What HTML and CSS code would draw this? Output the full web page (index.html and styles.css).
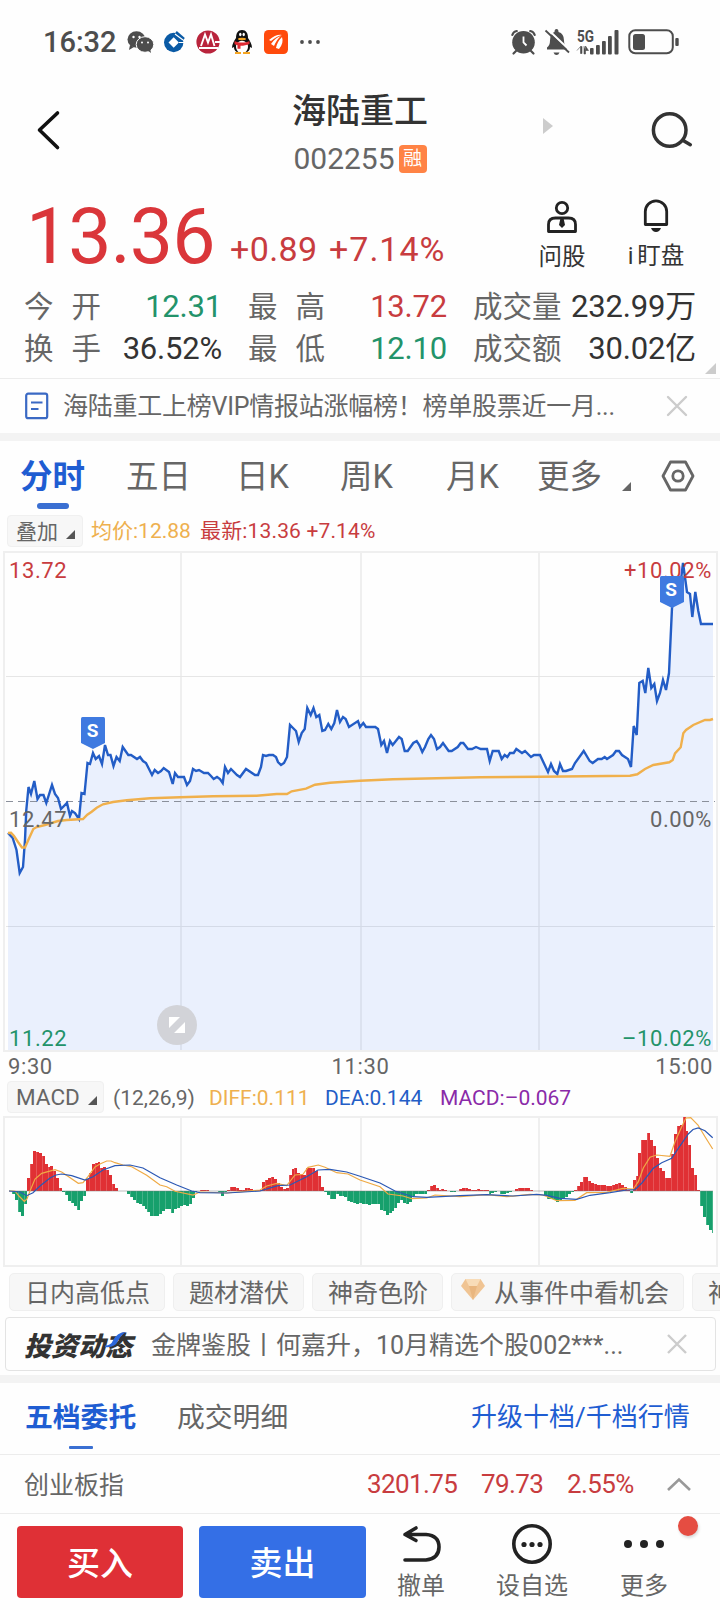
FILE: index.html
```html
<!DOCTYPE html>
<html lang="zh-CN">
<head>
  <meta charset="UTF-8">
  <meta name="viewport" content="width=device-width, initial-scale=1.0">
  <title>海陆重工 002255</title>
  <link rel="stylesheet" href="styles.css">
</head>
<body>

<!-- Status bar -->
<div class="status-bar">
  <span class="clock">16:32</span>
  <svg class="status-left" width="196" height="30" viewBox="126 27 196 30">
    <!-- chat bubbles -->
    <g fill="#4d4d4d">
      <ellipse cx="136.500" cy="39.500" rx="9" ry="8.200"/>
      <path d="M130 45l-1 5 5-3z"/>
      <ellipse cx="145" cy="44.500" rx="8.800" ry="7.800" stroke="#fff" stroke-width="1"/>
      <path d="M147 50l4 3-1-5z"/>
    </g>
    <g fill="#fff">
      <circle cx="133.500" cy="37" r="1.200"/><circle cx="139.500" cy="37" r="1.200"/>
      <circle cx="142" cy="42.500" r="1"/><circle cx="148" cy="42.500" r="1"/>
    </g>
    <!-- blue bank -->
    <circle cx="173.700" cy="42.500" r="9.700" fill="#0a5aa5"/>
    <path d="M173.700 37.300l5.200 5.200-5.200 5.200-5.200-5.200z" fill="#fff"/>
    <path d="M176 32l8 7" stroke="#0a5aa5" stroke-width="2.500"/>
    <path d="M175 34l8 6M179 42.500h6" stroke="#fff" stroke-width="1.200"/>
    <!-- red bank -->
    <circle cx="208" cy="42" r="11.600" fill="#b9243c"/>
    <path d="M201 46l4-11.500 3 8 3-8 3.500 11.500M199 48h19M215 42h6" fill="none" stroke="#fff" stroke-width="1.900"/>
    <!-- penguin -->
    <path d="M236 38c0-5 2-8 6-8s6 3 6 8c2 3 4 6 4 10l-2-1c0 4-3 6-8 6s-8-2-8-6l-2 1c0-4 2-7 4-10z" fill="#111"/>
    <ellipse cx="242" cy="47" rx="6" ry="6.200" fill="#fff"/>
    <path d="M235 52h6v2h-6zM243 52h7v2h-7z" fill="#f5a623"/>
    <path d="M234.500 41c4 2 11 2 15 0v3c-3 1.500-7 1.800-9 1.700v3h-3v-3.500l-3-1z" fill="#df2a33"/>
    <ellipse cx="240.300" cy="34.500" rx="1.200" ry="1.800" fill="#fff"/><ellipse cx="243.700" cy="34.500" rx="1.200" ry="1.800" fill="#fff"/>
    <ellipse cx="242" cy="39" rx="4" ry="1.200" fill="#f5a623"/>
    <!-- orange app -->
    <rect x="264" y="30" width="24" height="24" rx="4.500" fill="#ff4a0c"/>
    <path d="M269 40q7-6 13-5-5 1-11 6zM271 44q5-7 10-8-4 3-7 10zM276 48q1-6 6-11 2 6-3 12z" fill="#fff"/>
    <g fill="#4d4d4d"><circle cx="302" cy="42" r="1.900"/><circle cx="310" cy="42" r="1.900"/><circle cx="318" cy="42" r="1.900"/></g>
  </svg>
  <svg class="status-right" width="172" height="30" viewBox="509 27 172 30">
    <!-- alarm -->
    <g fill="none" stroke="#4d4d4d" stroke-width="2.200" stroke-linecap="round">
      <path d="M512.300 35q1-3.600 4.500-4M534.700 35q-1-3.600-4.500-4M516 51l-2.500 2.500M531 51l2.500 2.500"/>
    </g>
    <circle cx="523.500" cy="42.300" r="11.300" fill="#4d4d4d"/>
    <path d="M523.500 36.500v6l3 3" fill="none" stroke="#fff" stroke-width="1.800"/>
    <!-- muted bell -->
    <path d="M547 49.500v-2q3-2 3-7 0-7 4.500-8.500 0-3 2-3t2 3q5.500 1.500 5.500 8.500 0 5 3 7v2z" fill="#4d4d4d"/>
    <path d="M553.500 52.500h6q-1 2.500-3 2.500t-3-2.500z" fill="#4d4d4d"/>
    <path d="M547.500 29l23 22" stroke="#fff" stroke-width="2"/>
    <path d="M545.500 30.500l23.500 22" stroke="#4d4d4d" stroke-width="1.800"/>
    <!-- signal -->
    <text class="net" x="577" y="41.500" textLength="17" lengthAdjust="spacingAndGlyphs">5G</text>
    <path d="M577 50.500l3.500-4v7h1.500v-7h-1.500M584 46v8h1.500v-8l3 4.500h-3" fill="#4d4d4d" stroke="#4d4d4d" stroke-width=".6"/>
    <g fill="#4d4d4d">
      <rect x="590" y="48" width="3.600" height="6.500" rx="1"/>
      <rect x="596" y="45" width="3.800" height="9.500" rx="1"/>
      <rect x="602" y="41" width="3.800" height="13.500" rx="1"/>
      <rect x="608" y="36" width="3.800" height="18.500" rx="1"/>
      <rect x="614.500" y="30" width="4" height="24.500" rx="1"/>
    </g>
    <!-- battery -->
    <rect x="629.300" y="30.300" width="43.500" height="23" rx="6" fill="none" stroke="#4d4d4d" stroke-width="2"/>
    <rect x="633" y="34" width="12" height="16" rx="2.500" fill="#4d4d4d"/>
    <rect x="675.300" y="38" width="3.400" height="8" rx="1" fill="#4d4d4d"/>
  </svg>
</div>

<!-- Title -->
<header class="header">
  <svg class="back" width="26" height="44" viewBox="36 108 26 44"><path d="M57.500 113l-18 17 18 17.500" fill="none" stroke="#111" stroke-width="3.600" stroke-linecap="round" stroke-linejoin="round"/></svg>
  <div class="title">
    <h1>海陆重工</h1>
    <div class="code"><span>002255</span><b class="badge">融</b></div>
  </div>
  <svg class="next" width="12" height="18" viewBox="0 0 12 18"><path d="M1 1l10 8-10 8z" fill="#ccc"/></svg>
  <svg class="search" width="44" height="44" viewBox="650 108 44 44"><g fill="none" stroke="#333" stroke-width="3.500" stroke-linecap="round"><circle cx="669.700" cy="130" r="16.300"/><path d="M684 141l6.300 3.700"/></g></svg>
</header>

<!-- Price -->
<section class="quote">
  <span class="price">13.36</span>
  <span class="change">+0.89</span>
  <span class="change pct">+7.14%</span>
  <div class="action ask">
    <svg width="32" height="34" viewBox="546 200 32 34"><g fill="none" stroke="#222" stroke-width="2.800"><circle cx="562" cy="208" r="5.700"/><path d="M548.500 231.500v-7q0-6.500 7-6.500h13q7 0 7 6.500v7z" stroke-linejoin="round"/></g><path d="M560.500 218h3l1.500 7-3 3-3-3z" fill="#222"/></svg>
    <span>问股</span>
  </div>
  <div class="action watch">
    <svg width="28" height="34" viewBox="642 200 28 34"><path d="M645.300 225.500v-13a10.700 10.700 0 0 1 21.400 0v13z" fill="none" stroke="#222" stroke-width="2.800" stroke-linejoin="round"/><path d="M651 229h10q-1.500 4-5 4t-5-4z" fill="#222"/></svg>
    <span>i 盯盘</span>
  </div>
</section>

<section class="stats">
  <div class="pair"><span class="label two"><i>今</i><i>开</i></span><span class="value down">12.31</span></div>
  <div class="pair"><span class="label two"><i>最</i><i>高</i></span><span class="value up">13.72</span></div>
  <div class="pair"><span class="label">成交量</span><span class="value">232.99万</span></div>
  <div class="pair"><span class="label two"><i>换</i><i>手</i></span><span class="value">36.52%</span></div>
  <div class="pair"><span class="label two"><i>最</i><i>低</i></span><span class="value down">12.10</span></div>
  <div class="pair"><span class="label">成交额</span><span class="value">30.02亿</span></div>
  <svg class="corner" width="11" height="11" viewBox="0 0 11 11"><path d="M11 0v11H0z" fill="#ccc"/></svg>
</section>

<section class="notice">
  <svg width="24" height="28" viewBox="0 0 24 28"><rect x="1.200" y="1.700" width="21" height="24.500" rx="2" fill="none" stroke="#3a69c4" stroke-width="2.200"/><path d="M6 10.500h11.500M6 17h7.500" stroke="#3a69c4" stroke-width="2"/></svg>
  <p>海陆重工上榜VIP情报站涨幅榜！榜单股票近一月...</p>
  <svg class="close" width="22" height="22" viewBox="0 0 22 22"><path d="M2 2l18 18M20 2L2 20" stroke="#ccc" stroke-width="2.400" stroke-linecap="round"/></svg>
</section>
<div class="band"></div>

<!-- Period tabs -->
<nav class="tabs">
  <a class="active">分时</a>
  <a>五日</a>
  <a>日K</a>
  <a>周K</a>
  <a>月K</a>
  <a class="more">更多<svg width="9" height="9" viewBox="0 0 9 9"><path d="M9 0v9H0z" fill="#666"/></svg></a>
  <svg class="setting" width="34" height="32" viewBox="0 0 34 32"><g fill="none" stroke="#666" stroke-width="2.800" stroke-linejoin="round"><path d="M9.500 2h15l7.500 14-7.500 14h-15L2 16z"/><circle cx="17" cy="16" r="5.200"/></g></svg>
</nav>

<div class="legend">
  <span class="picker">叠加<svg width="9" height="9" viewBox="0 0 9 9"><path d="M9 0v9H0z" fill="#555"/></svg></span>
  <span class="avg">均价:12.88</span>
  <span class="last">最新:13.36 +7.14%</span>
</div>

<!-- Intraday chart -->
<svg class="chart" width="720" height="502" viewBox="0 551 720 502">
  <g stroke="#efefef" stroke-width="2" fill="none">
    <rect x="4" y="552" width="713" height="499"/>
    <path d="M181 552v499M361 552v499M539 552v499"/>
    <path d="M6 676.500h709M6 926.500h709" stroke-width="1.200" stroke="#e6e6e6"/>
  </g>
  <polygon id="priceFill" class="price-fill"/>
  <path d="M6 801.500h709" stroke="#8b909b" stroke-width="1" stroke-dasharray="7 5"/>
  <polyline id="priceLine" class="price-line" points="8,833 12.700,838 16.500,850 19.700,873 23,867 25,840 26.300,810 28.500,787 31,794 34.300,781 37.500,799 40,795 43.500,795 46.300,803 52,785 55,794 58,798 61,809 67,803 70,816 72,811 75,813 79,819 81.500,793 84.500,794 87.500,763 90,764 93,753 95.700,759 99,756 102,764 105,745 108,755 110.500,755 113.500,766 116.500,757 119.700,761 122.700,747 128.300,755 131,755 137,759 140,757 143,761 146,763 152,775 154.700,770 158,773 161,771 163.700,768 169,772 172.700,784 175,773 178,777 184,777 187,785 190,781 193,769 196,771 199,770 204,773 208,773 211,776 213.700,779 217,777 220,779 222.700,783 225,767 228,773 231,769 237,775 240,777 246,769 255,775 258,775 261,767 263,755 266,756 269,755 273,755 276,757 278,762 281,765 284,763 287,757 290,725 293,728 296,731 298.700,742 301.700,733 304.700,729 307.300,708 310.700,715 313.500,708 316.300,717 319.300,715 322.300,731 325,730 328.300,724 331.300,729 334.300,723 337,710 340,722 343,717 345.700,719 349,727 358,721 360,727 363.300,723 366,727 375.300,727 378,729 381.300,745 384,741 387,753 390,741 392.700,745 399,737 401.700,739 404.700,751 407.700,751 413.300,743 416.700,741 419.300,745 422.300,752 425,747 428.300,739 431,735 434,739 437,749 440,747 443,743 448.700,751 451.700,751 457.700,747 460.700,743 463.300,743 468,749 472,749 476,747 480.700,749 487,749 489.700,761 492.700,751 498.700,751 501.700,759 504.700,755 507.300,757 510,753 513.700,753 516.300,749 522,753 525,751 531,757 534,755 540,755 548,772 551,764 554,771 557.300,774 560,764 563,771 566,771 572,769 575,763 583.700,751 589.700,761 592.700,763 598,759 601.700,759 604.700,757 607,759 613,755 616,751 619,751 622,755 628,759 631,767 633.700,726 636.700,735 639.300,683 642.700,681 645.300,693 648.300,668 651.300,688 654.300,684 657,701 660,693 663,680 666,690 669,673 672,608 675,590 680,588 683,563 687,592 690,594 692.300,617 695.300,592 698.300,611 701,624 713,624"/>
  <polyline class="avg-line" points="8,833 11,832.700 14,836 18,842 22,847.500 25,847.500 28.300,840 33.300,829 36.700,827 45,825 58,821 66.700,820 83,819 87.300,814.700 91.700,811.700 96.700,807.700 103,804.300 113,802 126.700,800.300 150,798.300 180,797.300 213,796.300 256.700,795.700 276.700,794 287,794 291.700,791.300 306,788.700 315,784.700 330,782.700 360,780.700 393,779.300 480,777.300 540,776.700 630,775.700 637.300,774.300 645,769 653.300,765 669.300,762.300 672.700,760 675,753.300 680.700,747.300 683.300,733.300 686,730 693.300,725 705,720 710,720 713,719"/>
  <g class="axis-text">
    <text class="up" x="9" y="578">13.72</text>
    <text class="up" x="712" y="578" text-anchor="end">+10.02%</text>
    <text x="9" y="827">12.47</text>
    <text x="712" y="827" text-anchor="end">0.00%</text>
    <text class="down" x="9" y="1046">11.22</text>
    <text class="down" x="712" y="1046" text-anchor="end">–10.02%</text>
  </g>
  <g class="marker">
    <path d="M81 718.500q0-1.500 1.500-1.500h21q1.500 0 1.500 1.500v24.500l-12 6-12-6z"/>
    <text x="92.500" y="737">S</text>
    <path d="M660 577.500q0-1.500 1.500-1.500h21q1.500 0 1.500 1.500v24.500l-12 6-12-6z"/>
    <text x="671" y="596">S</text>
  </g>
  <circle cx="177" cy="1025" r="20" fill="#d2d3d8"/>
  <path d="M169 1017h11l-11 11zM185 1022v11h-11z" fill="#fff"/>
</svg>
<div class="times"><span>9:30</span><span>11:30</span><span>15:00</span></div>

<!-- MACD -->
<div class="legend macd">
  <span class="picker">MACD<svg width="9" height="9" viewBox="0 0 9 9"><path d="M9 0v9H0z" fill="#555"/></svg></span>
  <span class="params">(12,26,9)</span>
  <span class="diff">DIFF:0.111</span>
  <span class="dea">DEA:0.144</span>
  <span class="hist">MACD:–0.067</span>
</div>
<svg class="chart" width="720" height="153" viewBox="0 1115 720 153">
  <g stroke="#efefef" stroke-width="2" fill="none">
    <rect x="4" y="1117" width="713" height="149"/>
    <path d="M181 1117v149M361 1117v149M539 1117v149"/>
  </g>
  <g id="macdBars"></g>
  <path d="M9 1191h704" stroke="#777" stroke-width=".8" stroke-opacity=".6"/>
  <polyline class="diff-line" points="9,1191 15,1191 19,1196 24.300,1201.500 27,1199 30,1191 35,1179 41.700,1173.300 55,1169.700 61.700,1172 78.300,1183.300 83,1182.700 88,1176.700 95,1167 100,1164 106.700,1161 111,1161 115,1162.700 123,1165 131.700,1166.700 146.700,1175.300 160,1185 166.700,1186.700 175,1191.300 193,1195 200,1192 227,1193 260,1190 266.700,1186 276.700,1183.300 286.700,1185.700 295,1175 303,1174.300 308,1167.300 318.300,1165 325,1167.300 336.700,1172.700 348,1174 360,1180 380,1186.700 388,1194 403,1196 411.700,1198.700 426.700,1198 435,1195 460,1196.700 486.700,1194.700 506.700,1196.700 530,1194.300 543,1195 556.700,1200.700 575,1200.300 586.700,1192.700 606.700,1192.300 623,1188.300 633.300,1189 638.300,1181.700 643.300,1168 650,1157.300 656.700,1155 670,1156.300 675,1141.700 681.700,1126.700 686,1118 690.700,1117.700 698,1125 705,1136.700 712.700,1149"/>
  <polyline class="dea-line" points="9,1191 20,1192 26.700,1195.700 33,1192.700 40,1186 50,1178 56,1175 61.700,1174 71.700,1175.700 85,1180 93,1176.700 103,1170 115,1165.700 130,1165 143,1168 160,1177.700 176.700,1185 191.700,1191 200,1192.700 226.700,1193 260,1191 278,1185.700 290,1185 306.700,1176.700 318,1170 330,1169.300 346.700,1172 360,1176.300 380,1183 395,1191 413,1196.700 426.700,1197.300 460,1195.700 486.700,1194.700 513,1196 536.700,1194.300 546.700,1195.300 560,1198.300 576.700,1199.300 590,1195.300 610,1192.700 626.700,1190 635,1189.700 641.700,1183.300 653.300,1168.300 661.700,1162.700 671.700,1158.300 678.300,1148.300 688.300,1134 693,1129.500 698.300,1128 705,1130.700 712.700,1137.700"/>
</svg>

<div class="chips">
  <span>日内高低点</span>
  <span>题材潜伏</span>
  <span>神奇色阶</span>
  <span class="gem"><svg width="24" height="21" viewBox="0 0 24 21"><path d="M4.500 0h15L24 7 12 21 0 7z" fill="#f0c493"/><path d="M4.500 0h15L16 7H8z" fill="#f8dcb8"/><path d="M8 7h8l-4 14z" fill="#e9b67f"/></svg>从事件中看机会</span>
  <span>神</span>
</div>

<div class="promo">
  <b>投资动态</b>
  <svg class="swoosh" width="22" height="18" viewBox="0 0 22 18"><path d="M0 14.500q6 0 8-5Q12 1 21 1q-5 3-8 9-3 7-13 6z" fill="#2b67dc"/></svg>
  <p>金牌鉴股丨何嘉升，10月精选个股002***...</p>
  <svg class="close" width="22" height="22" viewBox="0 0 22 22"><path d="M2 2l18 18M20 2L2 20" stroke="#ccc" stroke-width="2.400"/></svg>
</div>
<div class="band"></div>

<!-- Order book -->
<div class="book-tabs">
  <a class="active">五档委托</a>
  <a>成交明细</a>
  <a class="upgrade">升级十档/千档行情</a>
</div>
<div class="index-row">
  <span class="name">创业板指</span>
  <span class="num">3201.75</span>
  <span class="num">79.73</span>
  <span class="num">2.55%</span>
  <svg width="26" height="16" viewBox="0 0 26 16"><path d="M2 14L13 3.500 24 14" fill="none" stroke="#999" stroke-width="2.600"/></svg>
</div>

<!-- Bottom bar -->
<footer class="bottom-bar">
  <button class="buy">买入</button>
  <button class="sell">卖出</button>
  <div class="tool cancel">
    <svg width="42" height="42" viewBox="400 1523 42 42"><g fill="none" stroke="#222" stroke-width="3.600" stroke-linecap="round" stroke-linejoin="round"><path d="M416 1528l-11 6.500 11 6M405 1534.500h21q13 1 13 12.500t-13 13h-21"/></g></svg>
    <span>撤单</span>
  </div>
  <div class="tool custom">
    <svg width="42" height="42" viewBox="511 1523 42 42"><circle cx="532" cy="1544" r="18.200" fill="none" stroke="#222" stroke-width="3.600"/><g fill="#222"><circle cx="524" cy="1544.500" r="2.600"/><circle cx="532" cy="1544.500" r="2.600"/><circle cx="540" cy="1544.500" r="2.600"/></g></svg>
    <span>设自选</span>
  </div>
  <div class="tool menu">
    <svg width="42" height="42" viewBox="623 1523 42 42"><g fill="#222"><circle cx="628" cy="1544" r="4"/><circle cx="644" cy="1544" r="4"/><circle cx="660" cy="1544" r="4"/></g></svg>
    <span>更多</span>
    <i class="dot"></i>
  </div>
</footer>

<script src="script.js"></script>
</body>
</html>
```
FILE: styles.css
```css
* {
  box-sizing: border-box;
}

body {
  margin: 0;
  width: 720px;
  height: 1610px;
  overflow: hidden;
  background: #fefefe;
  color: #666;
  font-family: Roboto, "Noto Sans CJK SC", sans-serif;
}

svg {
  display: block;
  flex: none;
}

i {
  font-style: normal;
}

.up { color: #c83c3f; fill: #c83c3f; }
.down { color: #23936a; fill: #23936a; }

/* status bar */
.status-bar {
  display: flex;
  align-items: center;
  height: 84px;
  padding-left: 43px;
}

.clock {
  width: 83px;
  font-size: 29px;
  font-weight: 500;
  color: #4d4d4d;
}

.status-right {
  margin-left: 187px;
}

.net {
  font-size: 16px;
  font-weight: 700;
  fill: #4d4d4d;
}

/* header */
.header {
  position: relative;
  display: flex;
  justify-content: center;
  height: 96px;
}

.title {
  text-align: center;
}

.title h1 {
  margin: 0;
  height: 53px;
  line-height: 54px;
  font-size: 34px;
  font-weight: 500;
  color: #333;
}

.code {
  display: flex;
  align-items: center;
  justify-content: center;
  height: 43px;
  font-size: 30px;
}

.badge {
  width: 28px;
  height: 28px;
  margin-left: 4px;
  border-radius: 4px;
  background: #ff8345;
  color: #fff;
  font-size: 19px;
  font-weight: 400;
  line-height: 27px;
}

.back, .next, .search {
  position: absolute;
  top: 24px;
}

.back { left: 36px; }
.next { left: 542px; top: 33px; }
.search { left: 650px; }

/* price */
.quote {
  display: flex;
  height: 105px;
  padding-left: 26px;
  color: #c83c3f;
}

.price {
  width: 204px;
  line-height: 115px;
  font-size: 77px;
  letter-spacing: -1px;
  color: #da363a;
}

.change {
  width: 99px;
  line-height: 138px;
  font-size: 34px;
  letter-spacing: 0.4px;
}

.change.pct {
  width: 198px;
  letter-spacing: 1px;
}

.action {
  display: flex;
  flex-direction: column;
  align-items: center;
  width: 70px;
  padding-top: 20px;
  color: #333;
  font-size: 23.5px;
}

.action span {
  line-height: 34px;
  margin-top: 6px;
}

.action.watch {
  width: 118px;
  margin-top: -1px;
  word-spacing: -2px;
}

/* day figures */
.stats {
  position: relative;
  display: grid;
  grid-template-columns: 198px 199px 223px;
  grid-template-rows: 42px 42px;
  column-gap: 26px;
  height: 93px;
  padding: 1px 0 0 24px;
  line-height: 42px;
}

.pair {
  display: flex;
  justify-content: space-between;
  white-space: nowrap;
}

.stats .label {
  font-size: 29.5px;
}

.stats .two {
  display: flex;
  justify-content: space-between;
  width: 77px;
}

.stats .value {
  font-size: 31px;
  letter-spacing: -0.2px;
}

.stats .value:not(.up):not(.down) {
  color: #333;
}

.corner {
  position: absolute;
  right: 4px;
  bottom: 4px;
}

/* notice */
.notice {
  display: flex;
  align-items: center;
  height: 55px;
  padding-left: 25px;
  border-top: 1px solid #ececec;
}

.notice p {
  width: 594px;
  margin: -4px 9px 0 14px;
  font-size: 25px;
  letter-spacing: -0.25px;
  white-space: nowrap;
}

.band {
  height: 8px;
  background: #f3f3f3;
}

/* tabs */
.tabs {
  display: grid;
  grid-template-columns: 106px 110px 104px 106px 91px 124px 34px;
  height: 70px;
  padding-left: 20px;
  line-height: 72px;
  font-size: 32.5px;
}

.tabs .active {
  position: relative;
  color: #1f5dd2;
  font-weight: 700;
}

.tabs .active::after {
  content: "";
  position: absolute;
  left: 17px;
  bottom: 4px;
  width: 32px;
  height: 6px;
  border-radius: 3px;
  background: #3a6fd2;
}

.tabs .more {
  display: flex;
}

.tabs .more svg {
  margin: 41px 0 0 20px;
}

.setting {
  margin-top: 19px;
}

.legend {
  display: flex;
  align-items: center;
  height: 40px;
  padding-left: 7px;
  font-size: 21px;
  white-space: nowrap;
}

.picker {
  display: flex;
  align-items: center;
  width: 76px;
  height: 32px;
  padding: 0 0 2px 8px;
  border-radius: 4px;
  background: #f7f7f7;
  border: 1px solid #f0f0f0;
}

.picker svg {
  margin: 9px 0 0 8px;
}

.avg {
  width: 109px;
  margin: -4px 0 0 8px;
  color: #eeb04f;
}

.last {
  margin-top: -4px;
  color: #c83c3f;
  letter-spacing: 0.15px;
}

.price-fill {
  fill: rgba(46, 106, 246, 0.095);
}

.price-line {
  fill: none;
  stroke: #235dc6;
  stroke-width: 2.4;
}

.avg-line {
  fill: none;
  stroke: #f0b04c;
  stroke-width: 2.4;
}

.axis-text {
  font-size: 22px;
  letter-spacing: 0.6px;
  fill: #666;
}

.marker path {
  fill: #3f7ae0;
}

.marker text {
  fill: #fff;
  font-size: 19px;
  font-weight: 700;
  text-anchor: middle;
}

.times {
  display: grid;
  grid-template-columns: 1fr 1fr 1fr;
  height: 26px;
  padding: 0 7px 0 8px;
  line-height: 27px;
  font-size: 22px;
  letter-spacing: 0.6px;
}

.times :nth-child(2) { text-align: center; }
.times :nth-child(3) { text-align: right; }

.macd {
  height: 36px;
}

.macd .picker {
  width: 97px;
  padding-bottom: 0;
  font-size: 22.5px;
}

.macd .picker svg {
  margin: 7px 0 0 8px;
}

.params, .diff, .dea, .hist { margin-top: 2px; }
.params { width: 86px; margin-left: 9px; }
.diff { width: 116px; margin-left: 10px; color: #eeb04f; }
.dea { width: 115px; color: #235dc6; }
.hist { color: #8a2aa8; }

.diff-line, .dea-line {
  fill: none;
  stroke: #efaa45;
  stroke-width: 1.2;
}

.dea-line {
  stroke: #2b58b4;
}

/* chips */
.chips {
  display: flex;
  gap: 8px;
  padding: 5px 0 6px 9px;
  overflow: hidden;
  white-space: nowrap;
}

.chips span {
  display: flex;
  align-items: center;
  flex: none;
  height: 38px;
  padding: 0 15px 2px 15px;
  width: 131px;
  border: 1px solid #efefef;
  border-radius: 5px;
  background: #f7f7f7;
  font-size: 25px;
}

.chips span:first-child {
  width: 156px;
}

.chips .gem {
  width: 233px;
  padding-left: 9px;
}

.gem svg {
  margin: -3px 9px 0 0;
}

/* promo */
.promo {
  position: relative;
  display: flex;
  align-items: center;
  height: 54px;
  margin: 0 4px 4px 5px;
  padding-left: 18px;
  border: 1px solid #e3e3e3;
  border-radius: 4px;
}

.promo b {
  width: 127px;
  color: #333;
  font-size: 27px;
  font-style: italic;
  font-weight: 900;
}

.promo p {
  width: 506px;
  margin: -2px 9px 0 0;
  font-size: 25px;
  white-space: nowrap;
}

.swoosh {
  position: absolute;
  left: 99px;
  top: 13px;
}

/* order book */
.book-tabs {
  display: flex;
  height: 71px;
  padding-left: 25px;
  line-height: 69px;
  font-size: 27.8px;
}

.book-tabs a {
  position: relative;
  width: 152px;
}

.book-tabs .active {
  color: #1f5dd2;
  font-weight: 700;
}

.book-tabs .active::after {
  content: "";
  position: absolute;
  left: 44px;
  bottom: 5px;
  width: 24px;
  height: 3px;
  border-radius: 1px;
  background: #3a6fd2;
}

.book-tabs .upgrade {
  margin-left: 142px;
  width: auto;
  font-size: 26px;
  color: #1f5dd2;
}

.index-row {
  display: flex;
  align-items: center;
  height: 59px;
  padding-left: 24px;
  border-top: 1px solid #ececec;
}

.name {
  width: 343px;
  margin-top: -2px;
  font-size: 25px;
}

.num {
  width: 114px;
  color: #c83c3f;
  font-size: 26px;
  letter-spacing: -0.6px;
}

.num + .num { width: 86px; }
.num + .num + .num { width: 99px; }

/* bottom bar */
.bottom-bar {
  display: flex;
  height: 97px;
  padding: 12px 0 0 17px;
  border-top: 1px solid #ececec;
}

.bottom-bar button {
  width: 166px;
  height: 72px;
  margin-right: 16px;
  padding: 0 0 3px;
  border: 0;
  border-radius: 4px;
  color: #fff;
  font-family: inherit;
  font-size: 33px;
  font-weight: 500;
}

.buy { background: #df3036; }
.bottom-bar .sell { width: 167px; margin-right: 0; background: #346fe6; }

.tool {
  position: relative;
  display: flex;
  flex-direction: column;
  align-items: center;
  margin-top: -3px;
  width: 110px;
  font-size: 24px;
}

.tool span {
  line-height: 34px;
  margin-top: 4px;
}

.custom, .menu { width: 112px; }

.dot {
  position: absolute;
  right: 2px;
  top: -7px;
  width: 20px;
  height: 20px;
  border-radius: 50%;
  background: #e54d42;
  box-shadow: 1px 2px 3px rgba(0, 0, 0, 0.15);
}
```
FILE: script.js
```js
// MACD histogram, one value per minute
const macd = [
  0, -3, -9, -21, -25, -13, 13, 27, 40, 39, 38, 35, 27, 24, 25, 20, 13, 3, -1, -4,
  -10, -12, -15, -19, -10, -5, 12, 18, 27, 28, 29, 23, 24, 21, 16, 7, 3, 0, 0, 0,
  -3, -6, -9, -12, -13, -15, -18, -21, -25, -25, -25, -23, -20, -18, -18, -22, -18, -17, -15, -14,
  -15, -13, -7, -1, 0, 1, 1, 1, 0, 0, 0, -1, -5, -1, 1, 4, 4, 3, 1, 1,
  3, 3, 2, 1, 1, 1, 9, 11, 13, 14, 12, 8, 4, 2, 3, 16, 22, 23, 18, 17,
  16, 23, 23, 23, 20, 15, 4, -1, -4, -8, -8, -3, -5, -5, -6, -10, -11, -12, -13, -12,
  -13, -13, -14, -13, -13, -13, -19, -20, -24, -22, -20, -17, -12, -9, -12, -13, -11, -5, -3, -3,
  -3, -3, 1, 5, 6, 3, 1, 2, 1, 0, -1, -1, 0, 2, 3, 3, 2, 1, 1, 2,
  1, 1, 1, -3, -2, -1, 0, -3, -3, -2, -1, 0, 2, 3, 3, 3, 3, 1, 0, 0,
  0, 0, -4, -8, -8, -9, -11, -9, -8, -6, -3, -1, 1, 5, 9, 14, 14, 10, 8, 7,
  6, 6, 6, 5, 5, 6, 7, 8, 6, 4, 1, -2, 11, 15, 38, 51, 51, 58, 51, 45,
  33, 23, 20, 13, 13, 37, 57, 65, 66, 74, 60, 46, 23, 16, 1, -15, -26, -34, -39, -42
];

const zero = 1191;
const step = 2.94;
const bars = document.getElementById('macdBars');

function addBar(x, width, v, color) {
  const rect = document.createElementNS('http://www.w3.org/2000/svg', 'rect');
  rect.setAttribute('x', x);
  rect.setAttribute('y', v > 0 ? zero - v : zero);
  rect.setAttribute('width', width);
  rect.setAttribute('height', Math.abs(v));
  rect.setAttribute('fill', color);
  rect.setAttribute('shape-rendering', 'crispEdges');
  bars.appendChild(rect);
}

macd.forEach((v, i) => {
  if (v === 0) return;
  const x = 9.3 + i * step;
  addBar(x, Math.min(step, 713 - x), v, v > 0 ? '#e03034' : '#16a06c');
  // lighter seam between neighbours
  if (i % 2) addBar(x, 1, v, v > 0 ? '#e65457' : '#43b288');
});

// shade everything under the price line
const points = document.getElementById('priceLine').getAttribute('points');
document.getElementById('priceFill').setAttribute('points', points + ' 713,1050 8,1050');
```
